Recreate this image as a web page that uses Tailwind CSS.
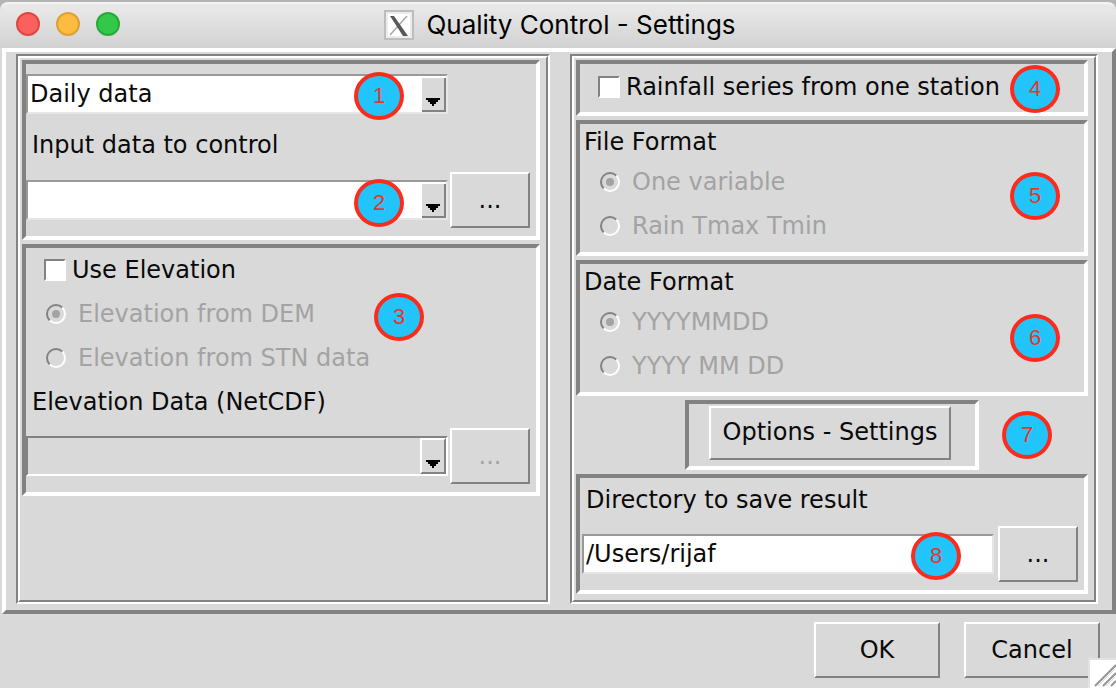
<!DOCTYPE html>
<html lang="en">
<head>
<meta charset="utf-8">
<title>Quality Control - Settings</title>
<script src="https://cdn.jsdelivr.net/npm/@tailwindcss/browser@4"></script>
</head>
<body class="bg-[#d9d9d9]">
<div class="flex min-h-screen flex-col bg-[#d9d9d9] font-['DejaVu_Sans',sans-serif] text-2xl text-[#0a0a0a]">

  <!-- Title bar -->
  <header class="bg-[#b4b4b4] pt-[2px]">
    <div class="relative flex h-[46px] items-center justify-center rounded-t-lg border-t-2 border-[#f4f4f4] bg-linear-to-b from-[#eaeaea] to-[#d2d2d2] pb-[2px] pl-1">
      <div class="absolute left-4 top-2 flex gap-4">
        <button type="button" aria-label="Close" class="size-6 rounded-full border-2 border-[#e04641] bg-[#fc605c]"></button>
        <button type="button" aria-label="Minimize" class="size-6 rounded-full border-2 border-[#dea034] bg-[#fdbc40]"></button>
        <button type="button" aria-label="Zoom" class="size-6 rounded-full border-2 border-[#27aa35] bg-[#34c84a]"></button>
      </div>
      <h1 class="flex items-center gap-3 font-['Inter',sans-serif] text-[26px] leading-8 text-black">
        <svg class="size-[30px]" viewBox="0 0 30 30" aria-hidden="true">
          <rect x="1" y="1" width="28" height="28" fill="#ececec" stroke="#bdbdbd" stroke-width="2"/>
          <rect x="4" y="4" width="22" height="22" fill="#fff"/>
          <path d="M23 6 6 25" stroke="#a8a8a8" stroke-width="1.5"/>
          <path d="M6 6h4l14 20h-5z" fill="#585858"/>
        </svg>
        Quality Control - Settings
      </h1>
    </div>
  </header>

  <form class="flex flex-1 flex-col">
    <main class="ml-[2px] grid grow grid-cols-[534fr_528fr] gap-5 border-4 border-b-[#828282] border-l-white border-r-[#828282] border-t-white pb-[6px] pl-[10px] pr-[14px] pt-[2px]">

      <!-- Input column -->
      <div class="border-2 border-b-white border-l-[#828282] border-r-white border-t-[#828282]">
        <div class="h-full border-2 border-b-[#828282] border-l-white border-r-[#828282] border-t-white">
          <div class="flex flex-col gap-1 pl-[2px] pr-[6px] pt-[2px]">

            <section class="relative border-4 border-b-white border-l-[#828282] border-r-white border-t-[#828282] pb-2 pt-[10px]">
              <div class="relative mr-[88px] h-10 border-2 border-b-[#e6e6e6] border-l-[#999] border-r-[#e6e6e6] border-t-[#999] bg-white">
                <select aria-label="Time step" class="block h-full w-full appearance-none bg-white pl-[2px] pr-7 outline-none"><option>Daily data</option></select>
                <span class="pointer-events-none absolute bottom-0 right-0 top-[2px] w-6 border-b-2 border-r-2 border-[#828282] bg-[#d9d9d9]">
                  <svg class="absolute bottom-[4px] left-1 h-2 w-[14px]" viewBox="0 0 14 8" shape-rendering="crispEdges"><path d="M0 0h14v2h-2v2h-2v2H8v2H6V6H4V4H2V2H0z"/></svg>
                </span>
              </div>
              <label for="input-data" class="flex h-[58px] items-center pl-[6px] pt-1">Input data to control</label>
              <div class="flex items-center gap-[2px] pr-[6px]">
                <div class="relative h-10 grow border-2 border-b-[#e6e6e6] border-l-[#999] border-r-[#e6e6e6] border-t-[#999] bg-white">
                  <select id="input-data" class="block h-full w-full appearance-none bg-white pl-[2px] pr-7 outline-none"><option></option></select>
                  <span class="pointer-events-none absolute bottom-0 right-0 top-[2px] w-6 border-b-2 border-r-2 border-[#828282] bg-[#d9d9d9]">
                    <svg class="absolute bottom-[4px] left-1 h-2 w-[14px]" viewBox="0 0 14 8" shape-rendering="crispEdges"><path d="M0 0h14v2h-2v2h-2v2H8v2H6V6H4V4H2V2H0z"/></svg>
                  </span>
                </div>
                <button type="button" class="h-14 w-20 border-2 border-b-[#828282] border-l-white border-r-[#828282] border-t-white">...</button>
              </div>
              <span class="absolute right-[132px] top-2 flex h-12 w-[50px] items-center justify-center rounded-[50%] border-4 border-[#fc2c1c] bg-[#22c5fb] font-['Liberation_Sans',sans-serif] text-[22px] text-[#e8352a]">1</span>
              <span class="absolute right-[132px] top-[115px] flex h-12 w-[50px] items-center justify-center rounded-[50%] border-4 border-[#fc2c1c] bg-[#22c5fb] font-['Liberation_Sans',sans-serif] text-[22px] text-[#e8352a]">2</span>
            </section>

            <section class="relative border-4 border-b-white border-l-[#828282] border-r-white border-t-[#828282] pb-2">
              <label class="flex h-11 items-center gap-[6px] pl-[18px]"><input type="checkbox" class="size-[22px] appearance-none border-2 border-b-white border-l-[#828282] border-r-white border-t-[#828282] bg-white checked:bg-[#b03060]">Use Elevation</label>
              <label class="flex h-11 items-center gap-3 pl-5 text-[#a3a3a3]"><input type="radio" name="elevation" checked disabled class="flex size-5 appearance-none items-center justify-center rounded-full border-2 border-b-white border-l-[#828282] border-r-white border-t-[#828282] before:size-2 before:rounded-full checked:before:bg-[#a3a3a3]">Elevation from DEM</label>
              <label class="flex h-11 items-center gap-3 pl-5 text-[#a3a3a3]"><input type="radio" name="elevation" disabled class="flex size-5 appearance-none items-center justify-center rounded-full border-2 border-b-white border-l-[#828282] border-r-white border-t-[#828282] before:size-2 before:rounded-full checked:before:bg-[#a3a3a3]">Elevation from STN data</label>
              <label for="netcdf" class="flex h-11 items-center pl-[6px]">Elevation Data (NetCDF)</label>
              <div class="flex items-center gap-[2px] pr-[6px] pt-1">
                <div class="relative h-10 grow border-2 border-b-white border-l-[#828282] border-r-white border-t-[#828282]">
                  <select id="netcdf" disabled class="block h-full w-full appearance-none bg-[#d9d9d9] pl-[2px] pr-7 opacity-100"><option></option></select>
                  <span class="pointer-events-none absolute bottom-0 right-0 top-0 w-[26px] border-2 border-b-[#828282] border-l-white border-r-[#828282] border-t-white bg-[#d9d9d9]">
                    <svg class="absolute bottom-[4px] left-1 h-2 w-[14px]" viewBox="0 0 14 8" shape-rendering="crispEdges"><path d="M0 0h14v2h-2v2h-2v2H8v2H6V6H4V4H2V2H0z"/></svg>
                  </span>
                </div>
                <button type="button" disabled class="h-14 w-20 border-2 border-b-[#828282] border-l-white border-r-[#828282] border-t-white text-[#a3a3a3]">...</button>
              </div>
              <span class="absolute right-[112px] top-[45px] flex h-12 w-[50px] items-center justify-center rounded-[50%] border-4 border-[#fc2c1c] bg-[#22c5fb] font-['Liberation_Sans',sans-serif] text-[22px] text-[#e8352a]">3</span>
            </section>
          </div>
        </div>
      </div>

      <!-- Format and output column -->
      <div class="border-2 border-b-white border-l-[#828282] border-r-white border-t-[#828282]">
        <div class="h-full border-2 border-b-[#828282] border-l-white border-r-[#828282] border-t-white">
          <div class="flex flex-col gap-1 pb-[6px] pl-[2px] pr-[6px] pt-[2px]">

            <section class="relative border-4 border-b-white border-l-[#828282] border-r-white border-t-[#828282]">
              <label class="flex h-12 items-center gap-[6px] pb-[2px] pl-[18px]"><input type="checkbox" class="size-[22px] appearance-none border-2 border-b-white border-l-[#828282] border-r-white border-t-[#828282] bg-white checked:bg-[#b03060]">Rainfall series from one station</label>
              <span class="absolute right-6 top-[1px] flex h-12 w-[50px] items-center justify-center rounded-[50%] border-4 border-[#fc2c1c] bg-[#22c5fb] font-['Liberation_Sans',sans-serif] text-[22px] text-[#e8352a]">4</span>
            </section>

            <section class="relative border-4 border-b-white border-l-[#828282] border-r-white border-t-[#828282] pb-1">
              <h2 class="flex h-9 items-center pl-1">File Format</h2>
              <label class="flex h-11 items-center gap-3 pl-5 text-[#a3a3a3]"><input type="radio" name="file-format" checked disabled class="flex size-5 appearance-none items-center justify-center rounded-full border-2 border-b-white border-l-[#828282] border-r-white border-t-[#828282] before:size-2 before:rounded-full checked:before:bg-[#a3a3a3]">One variable</label>
              <label class="flex h-11 items-center gap-3 pl-5 text-[#a3a3a3]"><input type="radio" name="file-format" disabled class="flex size-5 appearance-none items-center justify-center rounded-full border-2 border-b-white border-l-[#828282] border-r-white border-t-[#828282] before:size-2 before:rounded-full checked:before:bg-[#a3a3a3]">Rain Tmax Tmin</label>
              <span class="absolute right-6 top-12 flex h-12 w-[50px] items-center justify-center rounded-[50%] border-4 border-[#fc2c1c] bg-[#22c5fb] font-['Liberation_Sans',sans-serif] text-[22px] text-[#e8352a]">5</span>
            </section>

            <section class="relative border-4 border-b-white border-l-[#828282] border-r-white border-t-[#828282] pb-1">
              <h2 class="flex h-9 items-center pl-1">Date Format</h2>
              <label class="flex h-11 items-center gap-3 pl-5 text-[#a3a3a3]"><input type="radio" name="date-format" checked disabled class="flex size-5 appearance-none items-center justify-center rounded-full border-2 border-b-white border-l-[#828282] border-r-white border-t-[#828282] before:size-2 before:rounded-full checked:before:bg-[#a3a3a3]">YYYYMMDD</label>
              <label class="flex h-11 items-center gap-3 pl-5 text-[#a3a3a3]"><input type="radio" name="date-format" disabled class="flex size-5 appearance-none items-center justify-center rounded-full border-2 border-b-white border-l-[#828282] border-r-white border-t-[#828282] before:size-2 before:rounded-full checked:before:bg-[#a3a3a3]">YYYY MM DD</label>
              <span class="absolute right-6 top-[50px] flex h-12 w-[50px] items-center justify-center rounded-[50%] border-4 border-[#fc2c1c] bg-[#22c5fb] font-['Liberation_Sans',sans-serif] text-[22px] text-[#e8352a]">6</span>
            </section>

            <div class="relative flex justify-center">
              <div class="border-4 border-b-white border-l-[#828282] border-r-white border-t-[#828282] pb-[6px] pl-5 pr-6 pt-[2px]">
                <button type="button" class="block h-[54px] w-[242px] border-2 border-b-[#828282] border-l-white border-r-[#828282] border-t-white pb-[2px]">Options - Settings</button>
              </div>
              <span class="absolute right-9 top-[11px] flex h-12 w-[50px] items-center justify-center rounded-[50%] border-4 border-[#fc2c1c] bg-[#22c5fb] font-['Liberation_Sans',sans-serif] text-[22px] text-[#e8352a]">7</span>
            </div>

            <section class="relative border-4 border-b-white border-l-[#828282] border-r-white border-t-[#828282] pb-2">
              <label for="directory" class="flex h-11 items-center pl-[6px]">Directory to save result</label>
              <div class="flex items-center gap-1 pl-[2px] pr-[6px] pt-1">
                <input id="directory" type="text" value="/Users/rijaf" class="h-10 w-0 grow border-2 border-b-[#e6e6e6] border-l-[#999] border-r-[#e6e6e6] border-t-[#999] bg-white pl-[2px] outline-none">
                <button type="button" class="h-14 w-20 border-2 border-b-[#828282] border-l-white border-r-[#828282] border-t-white">...</button>
              </div>
              <span class="absolute right-[123px] top-[54px] flex h-12 w-[50px] items-center justify-center rounded-[50%] border-4 border-[#fc2c1c] bg-[#22c5fb] font-['Liberation_Sans',sans-serif] text-[22px] text-[#e8352a]">8</span>
            </section>
          </div>
        </div>
      </div>
    </main>

    <!-- Dialog actions -->
    <footer class="relative flex justify-end gap-6 pb-[10px] pr-4 pt-2">
      <button type="submit" class="h-14 w-[126px] border-2 border-b-[#828282] border-l-white border-r-[#828282] border-t-white">OK</button>
      <button type="button" class="h-14 w-[136px] border-2 border-b-[#828282] border-l-white border-r-[#828282] border-t-white">Cancel</button>
      <svg class="absolute bottom-0 right-0 h-[30px] w-7" viewBox="0 0 28 30" aria-hidden="true">
        <path fill="#e2e2e2" d="M0 0h28v30H0z"/>
        <path fill="#fff" d="M2 2h26v28H2z"/>
        <path d="M7 28 28 7M15 28l13-13M23 28l5-5" stroke="#949494" stroke-width="2" fill="none"/>
        <path d="M10 28 28 10M18 28l10-10" stroke="#d8d8d8" stroke-width="1" fill="none"/>
      </svg>
    </footer>
  </form>
</div>
</body>
</html>
